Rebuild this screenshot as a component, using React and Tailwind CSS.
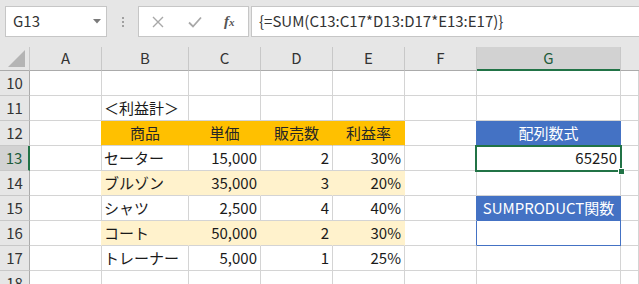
import React from "react";

const base =
  "h-full shrink-0 border-r border-b border-[#d4d4d4] flex items-center overflow-hidden whitespace-nowrap text-[15px] text-[#1a1a1a]";

const widths = [
  "w-[72px]",
  "w-[87px]",
  "w-[72px]",
  "w-[72px]",
  "w-[72px]",
  "w-[72px]",
  "w-[144px]",
  "flex-1",
];

function RowHeader({ n, selected }) {
  if (selected) {
    return (
      <div className="h-full w-[30px] shrink-0 bg-[#d2d2d2] border-r-2 border-r-[#217346] border-b border-b-[#c8c8c8] flex items-center justify-center text-[15px] text-[#1e5c3a]">
        {n}
      </div>
    );
  }
  return (
    <div className="h-full w-[30px] shrink-0 bg-[#e6e6e6] border-r border-r-[#ababab] border-b border-b-[#c8c8c8] flex items-center justify-center text-[15px] text-[#333]">
      {n}
    </div>
  );
}

function Row({ n, cells, selected, h = "h-[25px]" }) {
  return (
    <div className={"flex shrink-0 " + h}>
      <RowHeader n={n} selected={selected} />
      {widths.map((w, i) => {
        const c = cells[i] || {};
        return (
          <div key={i} className={base + " " + w + " " + (c.cls || "")}>
            {c.content}
          </div>
        );
      })}
    </div>
  );
}

const L = "justify-start pl-[2px]";
const R = "justify-end pr-[3px]";
const C = "justify-center";
const OR = "bg-[#ffc000] border-r-[#ffc000]";
const LO = "bg-[#fff2cc] border-r-[#fff2cc]";

export default function App() {
  return (
    <div className="w-[639px] h-[284px] overflow-hidden bg-white font-['Noto_Sans_CJK_JP',sans-serif] flex flex-col">
      {/* Formula bar area */}
      <div className="h-[47px] shrink-0 bg-[#e6e6e6] flex items-start pt-[6px] pl-[5px] overflow-hidden">
        <div className="relative w-[102px] h-[31px] shrink-0 bg-white border border-[#c6c6c6] flex items-center pl-[7px] text-[15px] text-[#333]">
          G13
          <svg className="absolute left-[87px] top-[12px]" width="8" height="5" viewBox="0 0 8 5">
            <path d="M0 0 L8 0 L4 4.5 Z" fill="#7a7a7a" />
          </svg>
        </div>
        <div className="ml-[15px] mt-[11px] flex flex-col gap-[2px] shrink-0">
          <span className="w-[2px] h-[2px] bg-[#a0a0a0]" />
          <span className="w-[2px] h-[2px] bg-[#a0a0a0]" />
          <span className="w-[2px] h-[2px] bg-[#a0a0a0]" />
        </div>
        <div className="ml-[14px] w-[111px] h-[31px] shrink-0 bg-white border border-[#c6c6c6] flex items-center">
          <svg className="ml-[13px]" width="12" height="12" viewBox="0 0 12 12">
            <path d="M1 1 L11 11 M11 1 L1 11" stroke="#a8a8a8" strokeWidth="1.4" fill="none" />
          </svg>
          <svg className="ml-[24px]" width="14" height="12" viewBox="0 0 14 12">
            <path d="M1 6.5 L5 10.5 L13 1.5" stroke="#a8a8a8" strokeWidth="1.8" fill="none" />
          </svg>
          <span className="ml-[22px] font-['Liberation_Serif',serif] italic font-bold text-[15px] text-[#555] leading-none">
            f<span className="text-[11px]">x</span>
          </span>
        </div>
        <div className="ml-[2px] w-[420px] h-[31px] shrink-0 bg-white border border-[#c6c6c6] flex items-center pl-[7px] text-[15px] text-[#333] whitespace-nowrap">
          {"{=SUM(C13:C17*D13:D17*E13:E17)}"}
        </div>
      </div>

      {/* Column header row */}
      <div className="h-[24px] shrink-0 flex bg-[#e6e6e6]">
        <div className="relative w-[30px] h-full shrink-0 border-r border-r-[#c8c8c8] border-b border-b-[#ababab]">
          <svg className="absolute left-0 top-0" width="29" height="23" viewBox="0 0 29 23">
            <path d="M25 3 L25 20 L8 20 Z" fill="#b4b4b4" />
          </svg>
        </div>
        {["A", "B", "C", "D", "E", "F"].map((l, i) => (
          <div
            key={l}
            className={
              "h-full shrink-0 border-r border-r-[#c8c8c8] border-b border-b-[#ababab] flex items-center justify-center text-[15px] text-[#333] " +
              widths[i]
            }
          >
            {l}
          </div>
        ))}
        <div className="relative w-[144px] h-full shrink-0 bg-[#d2d2d2] border-r border-r-[#c8c8c8] border-b border-b-[#ababab] flex items-center justify-center text-[15px] text-[#1e5c3a]">
          G
          <span className="absolute left-0 right-0 bottom-[-1px] h-[2px] bg-[#217346]" />
        </div>
        <div className="flex-1 h-full border-b border-b-[#ababab]" />
      </div>

      {/* Rows */}
      <Row n={10} cells={[]} />
      <Row n={11} cells={[{}, { cls: L, content: "＜利益計＞" }]} />
      <Row
        n={12}
        cells={[
          { cls: "border-r-[#ffc000]" },
          { cls: OR + " " + C + " text-[#262626]", content: "商品" },
          { cls: OR + " " + C + " text-[#262626]", content: "単価" },
          { cls: OR + " " + C + " text-[#262626]", content: "販売数" },
          { cls: OR + " " + C + " text-[#262626]", content: "利益率" },
          { cls: "border-r-[#4472c4]" },
          { cls: "bg-[#4472c4] border-r-[#4472c4] border-b-[#4472c4] justify-center text-white", content: "配列数式" },
        ]}
      />
      <Row
        n={13}
        selected
        cells={[
          {},
          { cls: L, content: "セーター" },
          { cls: R, content: "15,000" },
          { cls: R, content: "2" },
          { cls: R, content: "30%" },
          {},
          {
            cls: R + " relative overflow-visible",
            content: (
              <>
                65250
                <span className="absolute left-[-2px] top-[-1px] w-[147px] h-[27px] border-2 border-[#217346]" />
                <span className="absolute left-[141px] top-[22px] w-[5px] h-[5px] bg-[#217346] border border-white box-content" />
              </>
            ),
          },
        ]}
      />
      <Row
        n={14}
        cells={[
          { cls: "border-r-[#fff2cc]" },
          { cls: LO + " " + L, content: "ブルゾン" },
          { cls: LO + " " + R, content: "35,000" },
          { cls: LO + " " + R, content: "3" },
          { cls: LO + " " + R, content: "20%" },
        ]}
      />
      <Row
        n={15}
        cells={[
          {},
          { cls: L, content: "シャツ" },
          { cls: R, content: "2,500" },
          { cls: R, content: "4" },
          { cls: R, content: "40%" },
          { cls: "border-r-[#4472c4]" },
          { cls: "bg-[#4472c4] border-r-[#4472c4] border-b-[#4472c4] justify-center text-white", content: "SUMPRODUCT関数" },
        ]}
      />
      <Row
        n={16}
        cells={[
          { cls: "border-r-[#fff2cc]" },
          { cls: LO + " " + L, content: "コート" },
          { cls: LO + " " + R, content: "50,000" },
          { cls: LO + " " + R, content: "2" },
          { cls: LO + " " + R, content: "30%" },
          { cls: "border-r-[#4472c4]" },
          { cls: "border-r-[#4472c4] border-b-[#4472c4]" },
        ]}
      />
      <Row
        n={17}
        cells={[
          {},
          { cls: L, content: "トレーナー" },
          { cls: R, content: "5,000" },
          { cls: R, content: "1" },
          { cls: R, content: "25%" },
        ]}
      />
      <Row n={18} cells={[]} />
    </div>
  );
}
